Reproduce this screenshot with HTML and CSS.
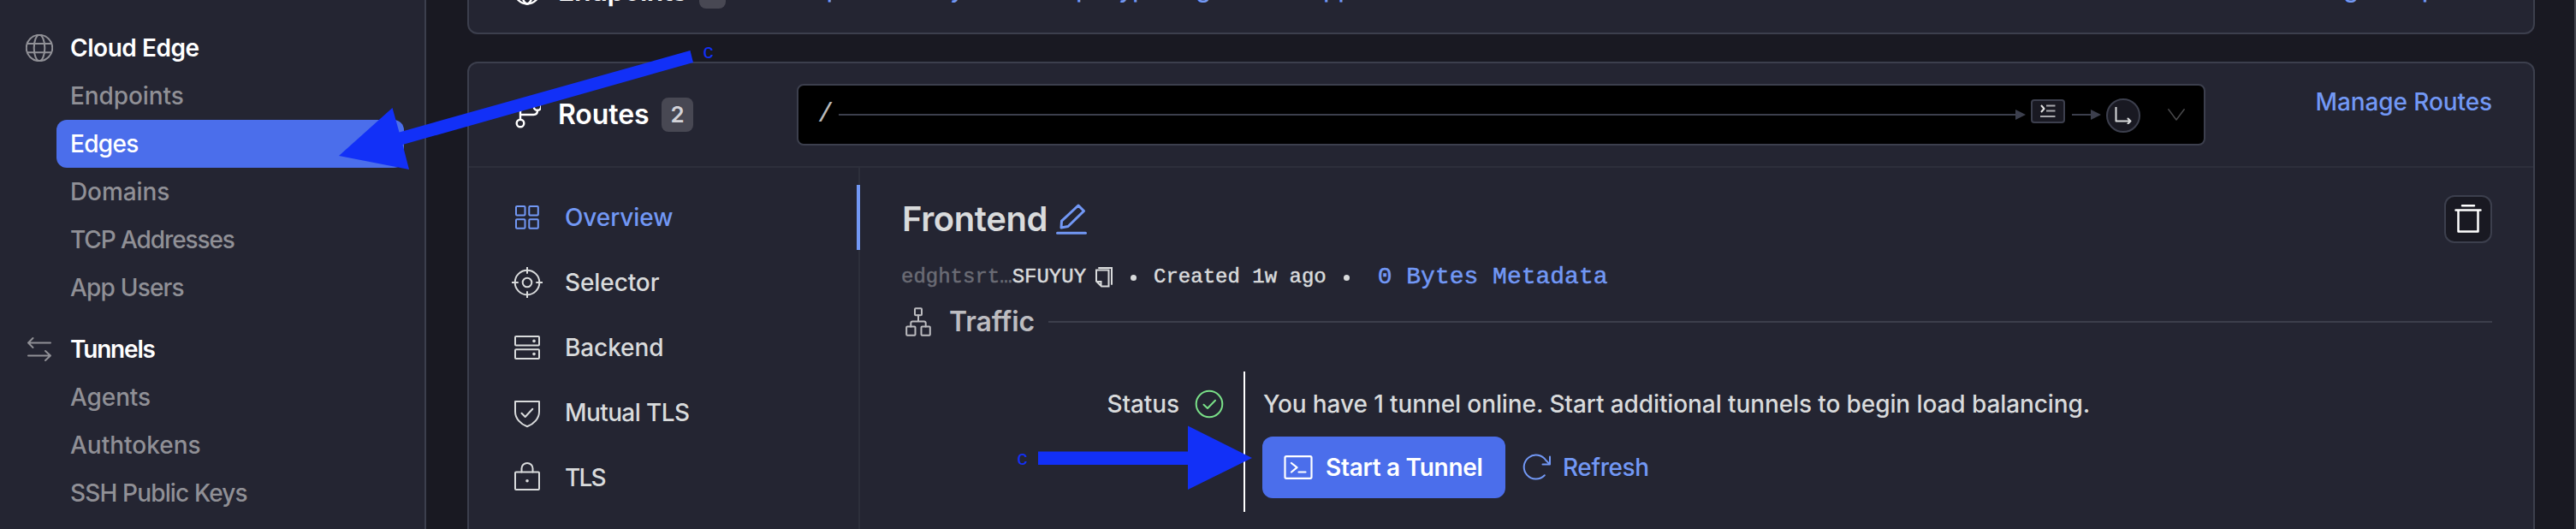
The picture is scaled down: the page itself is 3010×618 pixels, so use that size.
FILE: index.html
```html
<!DOCTYPE html>
<html lang="en">
<head>
<meta charset="utf-8">
<title>Edges</title>
<link rel="stylesheet" href="styles.css">
</head>
<body>
<div class="app">
  <nav class="sidebar">
    <div class="group">
      <div class="group-title"><svg class="group-icon" viewBox="0 0 32 32"><circle cx="16" cy="16" r="15.2"/><ellipse cx="16" cy="16" rx="6.3" ry="15.2"/><path d="M2 11H30M2 21.2H30"/></svg><span class="t-cloud">Cloud Edge</span></div>
      <a class="side-link">Endpoints</a>
      <a class="side-link active t-edges">Edges</a>
      <a class="side-link">Domains</a>
      <a class="side-link t-tcp">TCP Addresses</a>
      <a class="side-link t-users">App Users</a>
    </div>
    <div class="group">
      <div class="group-title"><svg class="group-icon" viewBox="0 0 32 32"><path d="M29 8.5H3M8.5 3L3 8.5L8.5 14M3 23.5H29M23 18L29 23.5L23 29"/></svg><span class="t-tunnels">Tunnels</span></div>
      <a class="side-link">Agents</a>
      <a class="side-link t-auth">Authtokens</a>
      <a class="side-link t-ssh">SSH Public Keys</a>
    </div>
  </nav>

  <main class="main">
    <section class="card card-endpoints">
      <header class="card-head">
        <div class="card-title"><svg class="title-icon" viewBox="0 0 32 32"><circle cx="16" cy="16" r="14.5"/><ellipse cx="16" cy="16" rx="6.3" ry="14.5"/><path d="M3 11H29M3 21H29"/></svg><h2 class="title-text t-endpoints">Endpoints</h2><span class="badge">1</span></div>
        <a class="link endpoint-url">https://notably-relevant-platypus.ngrok-free.app</a>
        <a class="link head-action">Manage Endpoints</a>
      </header>
    </section>

    <section class="card card-routes">
      <header class="card-head">
        <div class="card-title"><svg class="title-icon" viewBox="0 0 32 32"><circle cx="8" cy="26" r="4.3"/><circle cx="8" cy="6" r="4.3"/><circle cx="28" cy="6.5" r="4.3"/><path d="M8 21.5V10.5M8 16H23.5Q28 16 28 11"/></svg><h2 class="title-text t-routes">Routes</h2><span class="badge">2</span></div>
        <div class="route-select">
          <span class="route-path">/</span>
          <span class="route-line"></span>
          <svg class="arrow-head" viewBox="0 0 12 12"><path d="M0 0L12 6L0 12Z"/></svg>
          <span class="module"><svg class="module-icon" viewBox="0 0 20 16"><path class="chev" d="M2 1L5.5 5L2 9"/><path d="M8 1.5H18.5M8 7.5H18.5M1 14H18.5"/></svg></span>
          <span class="route-line short"></span>
          <svg class="arrow-head" viewBox="0 0 12 12"><path d="M0 0L12 6L0 12Z"/></svg>
          <span class="backend-dot"><svg class="dot-icon" viewBox="0 0 20 20"><path d="M1.5 0.5V16.5H18M15.5 13.5L18.5 16.5L15.5 19.5"/></svg></span>
          <svg class="chevron" viewBox="0 0 20 14"><path d="M0.8 0.8L10 13L19.2 0.8"/></svg>
        </div>
        <a class="link head-action">Manage Routes</a>
      </header>

      <div class="card-body">
        <nav class="tabs">
          <a class="tab selected"><svg class="tab-icon" viewBox="0 0 36 36"><rect x="5" y="5" width="10.5" height="10.5" rx="1"/><rect x="20.3" y="5" width="10.5" height="10.5" rx="1"/><rect x="5" y="20.3" width="10.5" height="10.5" rx="1"/><rect x="20.3" y="20.3" width="10.5" height="10.5" rx="1"/></svg><span>Overview</span></a>
          <a class="tab"><svg class="tab-icon" viewBox="0 0 36 36"><circle cx="18" cy="18" r="14.3"/><circle cx="18" cy="18" r="5.3"/><path d="M18 .5V7M18 29V35.5M.5 18H7M29 18H35.5"/></svg><span>Selector</span></a>
          <a class="tab"><svg class="tab-icon" viewBox="0 0 36 36"><rect x="4" y="5" width="28" height="10.6" rx="1"/><rect x="4" y="20.3" width="28" height="10.6" rx="1"/><circle class="solid" cx="26" cy="10.4" r="1.8"/><circle class="solid" cx="26" cy="25.6" r="1.8"/></svg><span>Backend</span></a>
          <a class="tab"><svg class="tab-icon" viewBox="0 0 36 36"><path d="M4 5H32V17C32 25 25.5 31.5 18 34.3C10.5 31.5 4 25 4 17ZM11.5 18.7L15.7 23L24.3 13.7"/></svg><span class="t-mutual">Mutual TLS</span></a>
          <a class="tab"><svg class="tab-icon" viewBox="0 0 36 36"><rect x="4" y="11.5" width="28" height="20.5" rx="1"/><path d="M11.5 11.5V7.2A6.5 6.2 0 0 1 24.5 7.2V11.5"/><circle class="solid" cx="18" cy="21.8" r="1.8"/></svg><span class="t-tls">TLS</span></a>
        </nav>

        <div class="content">
          <div class="name-row">
            <h1 class="name">Frontend</h1>
            <svg class="edit-icon" viewBox="0 0 36 36"><path d="M6.5 20.2L26 2L32.5 8.5L14 26.5L6 28ZM1.5 34.3H34.5"/></svg>
            <button class="delete"><svg class="trash" viewBox="0 0 32 36"><path d="M9 2.3H23M1.5 7.4H30.5M4.5 7.4V32.5H27.5V7.4"/></svg></button>
          </div>
          <div class="meta">
            <span class="faded">edghtsrt…</span><span>SFUYUY</span>
            <svg class="copy" viewBox="0 0 20 24"><path d="M1 3.5H15.5V22.5H7L1 16.5ZM1.5 17H6.5V22M4 1H19V20"/></svg>
            <span class="bullet"></span>
            <span>Created 1w ago</span>
            <span class="bullet"></span>
            <a class="link metadata">0 Bytes Metadata</a>
          </div>
          <div class="section-row">
            <svg class="traffic-icon" viewBox="0 0 30 34"><rect x="11" y="1.2" width="8" height="8" rx="1"/><rect x="1.2" y="22.5" width="10.3" height="10.3" rx="1"/><rect x="18.5" y="22.5" width="10.3" height="10.3" rx="1"/><path d="M15 9.2V16.5M6.3 22.5V18.5Q6.3 16.5 8.3 16.5H21.7Q23.7 16.5 23.7 18.5V22.5"/></svg>
            <h2 class="section-title">Traffic</h2>
            <span class="rule"></span>
          </div>
          <div class="status">
            <div class="status-label"><span>Status</span><svg class="check" viewBox="0 0 34 34"><circle cx="17" cy="17" r="15.3"/><path d="M10.5 17.8L15 22L24 12.7"/></svg></div>
            <div class="status-body">
              <p class="status-text">You have 1 tunnel online. Start additional tunnels to begin load balancing.</p>
              <div class="actions">
                <button class="primary"><svg class="terminal" viewBox="0 0 34 28"><rect x="1.5" y="1.2" width="31" height="25.6" rx="1.5"/><path d="M9 9L15.5 14.2L9 19.5M17.5 19.5H25.5"/></svg><span class="t-start">Start a Tunnel</span></button>
                <a class="link refresh"><svg class="refresh-icon" viewBox="0 0 34 32"><path d="M25.8 25.3A14 14 0 1 1 27.5 8L32 12.4M32 3.5V12.4H23.5"/></svg><span class="t-refresh">Refresh</span></a>
              </div>
            </div>
          </div>
        </div>
      </div>
    </section>
  </main>
</div>

<svg class="callouts" viewBox="0 0 3010 618">
  <polygon points="396,182 458.5,126 466.5,154.5 806.5,59 810,73 470.5,169 478,198"/>
  <polygon points="1213,527.5 1388,527.5 1388,497.5 1463,535 1388,572 1388,543 1213,543"/>
  <text x="821.5" y="68">c</text>
  <text x="1188.5" y="543">c</text>
</svg>
</body>
</html>
```
FILE: styles.css
```css
* { box-sizing: border-box; }

body {
  margin: 0;
  width: 3010px;
  height: 618px;
  overflow: hidden;
  position: relative;
  background: #191922;
  color: #d9dbdc;
  font: 450 28px/42px Inter, "Open Sans", sans-serif;
  letter-spacing: -0.1px;
}

h1, h2, p { margin: 0; }

svg {
  display: block;
  flex: none;
  fill: none;
  stroke: currentColor;
  stroke-width: 2;
  stroke-linecap: round;
  stroke-linejoin: round;
}

button {
  border: 0;
  padding: 0;
  font: inherit;
  color: inherit;
}

.app { display: flex; height: 618px; overflow: hidden; }

/* Sidebar */
.sidebar {
  flex: none;
  width: 498px;
  padding: 28px 24px 0 30px;
  border-right: 2px solid #3c3f4d;
  background: #242532;
  color: #909096;
}
.group { margin-bottom: 16px; }
.group-title {
  display: flex;
  align-items: center;
  gap: 20px;
  height: 56px;
  color: #fff;
  font-weight: 600;
}
.group-icon { width: 32px; height: 32px; color: #909096; }
.side-link {
  display: block;
  height: 56px;
  margin-left: 36px;
  padding-left: 16px;
  line-height: 56px;
  border-radius: 12px;
  white-space: nowrap;
}
.side-link.active { background: #4b6eeb; color: #fff; font-weight: 500; }

/* Cards */
.main {
  flex: 1;
  padding: 0 46px 0 48px;
  border-right: 2px solid #45464f;
}
.card {
  border: 2px solid #3c3f4d;
  border-radius: 12px;
  background: #242532;
}
.card-endpoints { margin-top: -60px; height: 100px; }
.card-routes { margin-top: 32px; height: 620px; }
.card-head {
  display: grid;
  grid-template-columns: 331px 1646px 1fr;
  height: 120px;
  padding: 24px 48px 22px 52px;
  align-items: start;
}
.card-endpoints .card-head { height: 96px; padding-top: 24px; }
.card-title { display: flex; align-items: center; height: 72px; color: #fff; }
.card-endpoints .card-title { height: 48px; }
.title-icon { width: 32px; height: 32px; margin-right: 20px; stroke-width: 2.4; }
.title-text { font-size: 32px; font-weight: 600; }
.badge {
  height: 40px;
  margin-left: 15px;
  padding: 0 10px;
  border-radius: 8px;
  background: #484853;
  color: #d3d3d8;
  font-size: 26px;
  font-weight: 600;
  line-height: 40px;
  text-align: center;
}
.link { color: #7298f5; white-space: nowrap; }
.head-action { text-align: right; }

.route-select {
  display: flex;
  align-items: center;
  height: 72px;
  padding: 0 22px;
  border: 2px solid #3c3f4d;
  border-radius: 8px;
  background: #000;
}
.route-path {
  width: 25px;
  font: 32px/40px "Liberation Mono", monospace;
  color: #bababa;
}
.route-line { flex: 1; height: 2px; background: #3c3f4d; }
.route-line.short { flex: none; width: 22px; margin-left: 8px; }
.arrow-head { width: 12px; height: 12px; fill: #3c3f4d; stroke: none; }
.module {
  display: grid;
  place-items: center;
  width: 40px;
  height: 28px;
  margin: 0 0 8px 6px;
  border: 2px solid #3c3f4d;
  border-radius: 4px;
  background: #191922;
}
.module-icon { width: 20px; height: 16px; color: #a9a9ad; stroke-linecap: butt; }
.module-icon .chev { color: #e5e5e5; }
.backend-dot {
  display: grid;
  place-items: center;
  width: 40px;
  height: 40px;
  margin: 2px 32px 0 6px;
  border: 2px solid #3c3f4d;
  border-radius: 50%;
  background: #191922;
}
.dot-icon { width: 20px; height: 20px; }
.chevron { width: 20px; height: 14px; color: #48484a; stroke-width: 1.5; }

/* Body */
.card-body {
  display: grid;
  grid-template-columns: 457px 1fr;
  height: 500px;
  border-top: 2px solid #2d2f3b;
}
.tabs { padding: 20px 0 0; border-right: 2px solid #2d2f3b; }
.tab {
  display: flex;
  align-items: center;
  gap: 26px;
  height: 76px;
  padding-left: 50px;
}
.tab.selected {
  margin-right: -2px;
  border-right: 4px solid #7298f5;
  color: #7298f5;
}
.tab-icon { width: 36px; height: 36px; }
.solid { fill: currentColor; stroke: none; }

.content { padding: 32px 48px 0 48px; }
.name-row { display: flex; align-items: center; height: 56px; }
.name { margin-left: 1px; font-size: 40px; font-weight: 560; line-height: 52px; letter-spacing: -0.4px; }
.edit-icon { width: 36px; height: 36px; margin-left: 10px; color: #7298f5; stroke-width: 3; }
.delete {
  display: grid;
  place-items: center;
  width: 56px;
  height: 56px;
  margin-left: auto;
  border: 2px solid #3c3f4d;
  border-radius: 12px;
  background: #191922;
  color: #fff;
}
.trash { width: 32px; height: 36px; stroke-width: 2.5; }

.meta {
  display: flex;
  align-items: center;
  height: 42px;
  margin-top: 19px;
  font: 24px/42px "Liberation Mono", monospace;
  letter-spacing: 0;
  -webkit-text-stroke: 0.5px currentColor;
  white-space: nowrap;
}
.faded { color: #6a6b74; }
.copy { width: 20px; height: 24px; margin: 0 21px 0 11px; stroke-linejoin: miter; }
.bullet { width: 7px; height: 7px; margin-right: 20px; border-radius: 50%; background: currentColor; }
.bullet + .metadata { margin-left: 13px; }
.meta span + .bullet { margin-left: 20px; }
.metadata { font-size: 28px; }

.section-row { display: flex; align-items: center; height: 42px; margin-top: 10px; color: #bcbcc0; }
.traffic-icon { width: 30px; height: 34px; margin-left: 5px; }
.section-title { margin: 0 16px 0 21px; font-size: 32px; font-weight: 600; }
.rule { flex: 1; height: 2px; background: #3c3e4b; }

.status {
  display: grid;
  grid-template-columns: 400px 1fr;
  height: 164px;
  margin-top: 37px;
}
.status-label {
  display: flex;
  justify-content: flex-end;
  gap: 18px;
  height: 76px;
  align-items: center;
  padding-right: 23px;
}
.check { width: 34px; height: 34px; color: #7ae088; }
.status-body { padding-left: 20px; border-left: 2px solid #fff; }
.status-text { height: 76px; line-height: 76px; white-space: nowrap; padding-left: 1px; }
.actions { display: flex; gap: 20px; }
.primary {
  display: flex;
  align-items: center;
  gap: 15px;
  width: 284px;
  height: 72px;
  padding-left: 25px;
  border-radius: 12px;
  background: #4b6eeb;
  color: #fff;
  font-weight: 600;
  white-space: nowrap;
}
.terminal { width: 34px; height: 28px; stroke-width: 2.2; }
.refresh { display: flex; align-items: center; gap: 13px; height: 72px; }
.refresh-icon { width: 34px; height: 32px; }

/* Tracking */
.t-cloud { letter-spacing: -0.45px; }
.t-edges { letter-spacing: -0.7px; }
.t-tcp { letter-spacing: -1.1px; }
.t-users { letter-spacing: -0.8px; }
.t-tunnels { letter-spacing: -1.2px; }
.t-auth { letter-spacing: 0; }
.t-ssh { letter-spacing: -0.85px; }
.t-mutual { letter-spacing: -0.6px; }
.t-tls { letter-spacing: -1.8px; }
.t-start { letter-spacing: -0.3px; }
.t-refresh { letter-spacing: -0.4px; }
.t-endpoints { letter-spacing: -0.5px; }
.t-routes { letter-spacing: -0.1px; }

/* Callout arrows drawn over the page */
.callouts {
  position: absolute;
  top: 0;
  left: 0;
  width: 3010px;
  height: 618px;
  fill: #1230f7;
  stroke: none;
  font: 24px "Liberation Sans", sans-serif;
  letter-spacing: 0;
}
```
